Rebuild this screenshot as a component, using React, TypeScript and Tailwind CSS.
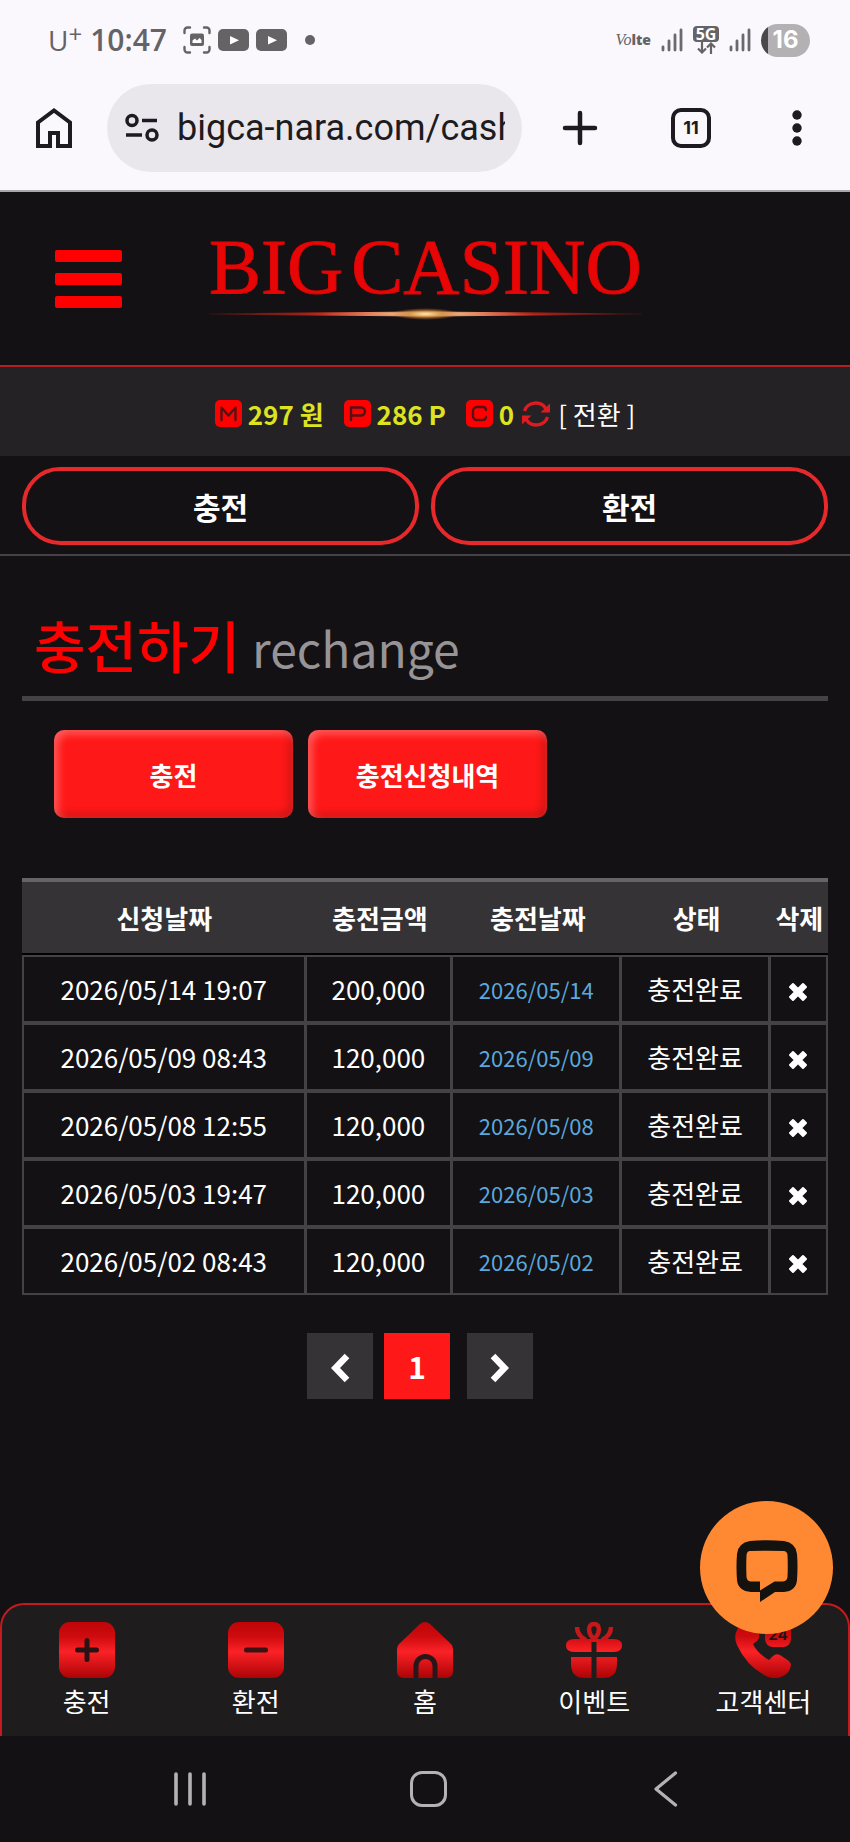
import React from "react";

interface DepositRow {
  requestedAt: string;
  amount: string;
  paidAt: string;
  status: string;
}

interface NavItem {
  label: string;
  icon: React.ReactNode;
}

const deposits: DepositRow[] = [
  { requestedAt: "2026/05/14 19:07", amount: "200,000", paidAt: "2026/05/14", status: "충전완료" },
  { requestedAt: "2026/05/09 08:43", amount: "120,000", paidAt: "2026/05/09", status: "충전완료" },
  { requestedAt: "2026/05/08 12:55", amount: "120,000", paidAt: "2026/05/08", status: "충전완료" },
  { requestedAt: "2026/05/03 19:47", amount: "120,000", paidAt: "2026/05/03", status: "충전완료" },
  { requestedAt: "2026/05/02 08:43", amount: "120,000", paidAt: "2026/05/02", status: "충전완료" },
];

const SignalIcon = () => (
  <svg width="22" height="24" viewBox="0 0 22 24" stroke="#6b696b" strokeWidth="2.8" strokeLinecap="round">
    <path d="M2 22v-3M8 22V13M14 22V7M20 22V2" />
  </svg>
);

const VideoIcon = () => (
  <svg width="31" height="22" viewBox="0 0 31 22">
    <rect width="31" height="22" rx="5" fill="#656365" />
    <path d="M12 7l9 4.200-9 4.200z" fill="#fff" />
  </svg>
);

const StatusBar = () => (
  <div className="flex items-center justify-between h-[80px] pl-12 pr-[40px] text-[#656365]">
    <div className="flex items-center">
      <span className="flex items-start font-['Open_Sans',sans-serif] font-normal text-[28px] leading-8">
        U<span className="text-2xl leading-5 font-normal">+</span>
      </span>
      <span className="ml-2 font-['Open_Sans',sans-serif] font-semibold text-[30px] leading-8">10:47</span>
      <div className="flex items-center gap-[7px] ml-4">
        <svg width="28" height="28" viewBox="0 0 28 28" fill="none" stroke="#656365" strokeWidth="2.400" strokeLinecap="round">
          <path d="M1.500 7V4.500a3 3 0 0 1 3-3H7M21 1.500h2.500a3 3 0 0 1 3 3V7M26.500 21v2.500a3 3 0 0 1-3 3H21M7 26.500H4.500a3 3 0 0 1-3-3V21" />
          <rect x="7" y="7.500" width="14" height="12.500" rx="2" fill="#656365" stroke="none" />
          <path d="M9.500 17v-2.500l2.500-2 2 2 2.500-2.500 2 2V17z" fill="#fff" stroke="none" />
        </svg>
        <VideoIcon />
        <VideoIcon />
      </div>
      <span className="ml-[18px] w-[10px] h-[10px] rounded-full bg-[#656365]" />
    </div>
    <div className="flex items-center gap-[10px]">
      <span className="flex items-end leading-5">
        <i className="font-['Liberation_Serif',serif] text-base leading-5">Vo</i>
        <b className="font-['Open_Sans',sans-serif] font-extrabold text-sm leading-5">lte</b>
      </span>
      <SignalIcon />
      <div className="flex flex-col items-center">
        <span className="w-[26px] rounded bg-[#656365] text-white text-center font-['Open_Sans',sans-serif] font-bold text-base leading-4">
          5G
        </span>
        <svg width="20" height="12" viewBox="0 0 20 12" fill="none" stroke="#656365" strokeWidth="2.200">
          <path d="M6 0v10.500M2 6.500l4 4 4-4M15 12V1.500M11 5.500l4-4 4 4" />
        </svg>
      </div>
      <SignalIcon />
      <div className="flex items-center justify-center w-[49px] h-[33px] rounded-full overflow-hidden bg-linear-to-r from-[#4a484a] from-15% to-[#b3b1b4] to-15%">
        <span className="font-['Inter',sans-serif] font-bold text-2xl leading-8 text-white">16</span>
      </div>
    </div>
  </div>
);

const BrowserToolbar = () => (
  <div className="flex items-center h-[112px] pb-[18px] pt-1 text-[#1d1b20] border-b-2 border-[#a9a7ab]">
    <button type="button" aria-label="홈" className="flex justify-center w-[107px]">
      <svg width="36" height="40" viewBox="0 0 36 40" fill="none" stroke="currentColor" strokeWidth="4">
        <path d="M2 38V14.500L18 2.500l16 12V38H22V25h-8v13z" />
      </svg>
    </button>
    <div className="flex flex-1 min-w-0 items-center h-[88px] rounded-full bg-[#e9e7ec] pl-[18px] pr-[17px]">
      <svg className="shrink-0" width="34" height="30" viewBox="0 0 34 30" fill="none" stroke="currentColor" strokeWidth="3.500">
        <circle cx="7" cy="7.500" r="5" />
        <path d="M17 7.500h15M1 22h16" />
        <circle cx="27" cy="22" r="5" />
      </svg>
      <input
        aria-label="주소"
        className="flex-1 min-w-0 ml-[18px] bg-transparent outline-none font-['Roboto',sans-serif] text-[36px] leading-[44px]"
        defaultValue="bigca-nara.com/cash"
      />
    </div>
    <button type="button" aria-label="새 탭" className="flex justify-center w-[116px]">
      <svg width="36" height="36" viewBox="0 0 36 36" stroke="currentColor" strokeWidth="4.500" strokeLinecap="round">
        <path d="M18 3v30M3 18h30" />
      </svg>
    </button>
    <button type="button" aria-label="탭 11개" className="flex justify-center w-[106px]">
      <span className="flex items-center justify-center w-10 h-10 rounded-[10px] border-4 border-current font-['Inter',sans-serif] font-bold text-lg">
        11
      </span>
    </button>
    <button type="button" aria-label="메뉴" className="flex justify-center w-[106px]">
      <svg width="10" height="36" viewBox="0 0 10 36" fill="currentColor">
        <circle cx="5" cy="5" r="4.700" />
        <circle cx="5" cy="18" r="4.700" />
        <circle cx="5" cy="31" r="4.700" />
      </svg>
    </button>
  </div>
);

const SiteHeader = () => (
  <header className="flex items-center h-[175px] pl-[55px] border-b-2 border-[#b32024]">
    <button type="button" aria-label="전체 메뉴" className="flex flex-col gap-[11px]">
      <span className="w-[67px] h-3 rounded-xs bg-[#ff0000]" />
      <span className="w-[67px] h-3 rounded-xs bg-[#ff0000]" />
      <span className="w-[67px] h-3 rounded-xs bg-[#ff0000]" />
    </button>
    <a href="#" className="flex flex-col ml-[87px] pb-2">
      <span className="flex gap-2 font-['Liberation_Serif',serif] text-[78px] leading-[78px] whitespace-nowrap text-[#e80505] [-webkit-text-stroke:1px_#e00505]">
        <span>BIG</span>
        <span>CASINO</span>
      </span>
      <svg className="w-full" height="16" viewBox="0 0 430 16" preserveAspectRatio="none">
        <defs>
          <linearGradient id="beam">
            <stop offset="0" stopColor="#7a1a1a" stopOpacity="0.3" />
            <stop offset="0.25" stopColor="#c8251a" />
            <stop offset="0.5" stopColor="#ffe2a0" />
            <stop offset="0.75" stopColor="#c8251a" />
            <stop offset="1" stopColor="#7a1a1a" stopOpacity="0.3" />
          </linearGradient>
          <radialGradient id="spark">
            <stop offset="0" stopColor="#ffe9b0" />
            <stop offset="0.5" stopColor="#d08a3c" stopOpacity="0.8" />
            <stop offset="1" stopColor="#d0602c" stopOpacity="0" />
          </radialGradient>
        </defs>
        <path d="M0 8Q150 7 215 6Q280 7 430 8Q280 9 215 10Q150 9 0 8z" fill="url(#beam)" stroke="url(#beam)" />
        <ellipse cx="215" cy="8" rx="34" ry="6" fill="url(#spark)" />
      </svg>
    </a>
  </header>
);

const Badge = ({ path }: { path: string }) => (
  <svg width="27" height="27" viewBox="0 0 27 27">
    <rect width="27" height="27" rx="5" fill="#ff0000" />
    <path d={path} fill="none" stroke="#5a1012" strokeWidth="2.400" strokeLinecap="round" strokeLinejoin="round" />
  </svg>
);

const Balance = () => (
  <div className="flex items-center justify-center gap-5 h-[89px] pt-1 bg-[#242224] text-[26px] leading-8">
    <p className="flex items-center gap-[6px] font-bold text-[#dde221]">
      <Badge path="M6.500 20V7.500l7 8 7-8V20" />
      297 원
    </p>
    <p className="flex items-center gap-[6px] font-bold text-[#dde221]">
      <Badge path="M7 20V7.500h10a3.500 3.500 0 0 1 0 8H7" />
      286 P
    </p>
    <div className="flex items-center gap-2">
      <p className="flex items-center gap-[6px] font-bold text-[#dde221]">
        <Badge path="M20 10a3 3 0 0 0-3-3h-6a4 4 0 0 0-4 4v5a4 4 0 0 0 4 4h6a3 3 0 0 0 3-3" />
        0
      </p>
      <button type="button" className="flex items-center gap-2 text-white">
        <svg width="28" height="28" viewBox="0 0 28 28" fill="none" stroke="#e01b1f" strokeWidth="3.400">
          <path d="M2.500 11a11.500 10.500 0 0 1 21.500-2M25.500 17a11.500 10.500 0 0 1-21.500 2" />
          <path d="M28 3.500v9h-9.500zM0 24.500v-9h9.500z" fill="#e01b1f" stroke="none" />
        </svg>
        [ 전환 ]
      </button>
    </div>
  </div>
);

const QuickActions = () => (
  <div className="grid grid-cols-2 gap-3 px-[22px] pt-[11px] pb-[9px] border-b-2 border-[#444246]">
    <button type="button" className="h-[78px] rounded-[38px] border-4 border-[#e8292c] text-[30px] font-bold text-white">
      충전
    </button>
    <button type="button" className="h-[78px] rounded-[38px] border-4 border-[#e8292c] text-[30px] font-bold text-white">
      환전
    </button>
  </div>
);

const DepositTable = () => (
  <table className="w-full mt-[60px] table-fixed border-separate border-spacing-0 text-center text-[26px] text-white">
    <colgroup>
      <col className="w-[35.3%]" />
      <col className="w-[18.2%]" />
      <col className="w-[21%]" />
      <col className="w-[18.4%]" />
      <col />
    </colgroup>
    <thead>
      <tr>
        {["신청날짜", "충전금액", "충전날짜", "상태", "삭제"].map((head) => (
          <th
            key={head}
            scope="col"
            className="p-0 font-bold leading-[71px] whitespace-nowrap bg-[#353335] border-t-4 border-t-[#666466] border-b-2 border-b-black"
          >
            {head}
          </th>
        ))}
      </tr>
    </thead>
    <tbody className="leading-[64px] [&_td]:p-0 [&_td]:border-[#444246] [&_td]:border-b-4 [&_td]:border-r-3 [&_td:first-child]:border-l-2 [&_td:last-child]:border-r-2 [&_tr:first-child>td]:border-t-2 [&_tr:last-child>td]:border-b-2">
      {deposits.map((row) => (
        <tr key={row.requestedAt}>
          <td>{row.requestedAt}</td>
          <td>{row.amount}</td>
          <td className="text-[22px] text-[#5aa9dd]">{row.paidAt}</td>
          <td>{row.status}</td>
          <td>
            <button type="button" aria-label="삭제" className="block mx-auto pt-[6px]">
              <svg width="20" height="20" viewBox="0 0 20 20" fill="#fff" stroke="#fff" strokeWidth="2" strokeLinejoin="round">
                <path d="M5 2l5 5 5-5 3 3-5 5 5 5-3 3-5-5-5 5-3-3 5-5-5-5z" />
              </svg>
            </button>
          </td>
        </tr>
      ))}
    </tbody>
  </table>
);

const Pager = () => (
  <nav aria-label="페이지" className="flex justify-center gap-[11px] mt-[38px] pr-[10px]">
    <button type="button" aria-label="이전" className="flex items-center justify-center w-[66px] h-[66px] pt-1 bg-[#353335]">
      <svg width="20" height="30" viewBox="0 0 20 30" fill="none" stroke="#fff" strokeWidth="6.500">
        <path d="M17 3L5.500 15 17 27" />
      </svg>
    </button>
    <button type="button" aria-current="page" className="w-[66px] h-[66px] bg-[#ff1818] text-[30px] font-bold text-white">
      1
    </button>
    <button type="button" aria-label="다음" className="flex items-center justify-center w-[66px] h-[66px] pt-1 ml-[6px] bg-[#353335]">
      <svg width="20" height="30" viewBox="0 0 20 30" fill="none" stroke="#fff" strokeWidth="6.500">
        <path d="M3 3l11.500 12L3 27" />
      </svg>
    </button>
  </nav>
);

const navItems: NavItem[] = [
  {
    label: "충전",
    icon: (
      <>
        <rect width="56" height="56" rx="11" fill="url(#navRed)" />
        <path d="M28 18.500v19M18.500 28h19" stroke="#2a1214" strokeWidth="5" strokeLinecap="round" />
      </>
    ),
  },
  {
    label: "환전",
    icon: (
      <>
        <rect width="56" height="56" rx="11" fill="url(#navRed)" />
        <path d="M18.500 28h19" stroke="#3a1214" strokeWidth="5" strokeLinecap="round" />
      </>
    ),
  },
  {
    label: "홈",
    icon: (
      <>
        <path
          d="M23 2q5-4 10 0l21 20q2 2 2 5v22q0 7-7 7H7q-7 0-7-7V27q0-3 2-5z"
          fill="url(#navRed)"
        />
        <path d="M19 56V44a9.500 9.500 0 0 1 19 0v12" fill="none" stroke="#2a1618" strokeWidth="5" />
      </>
    ),
  },
  {
    label: "이벤트",
    icon: (
      <>
        <g fill="none" stroke="#c4181b" strokeWidth="4.500">
          <path d="M28 17c-6-5-7-15 0-15s6 10 0 15z" />
          <path d="M11 5c0 6 3 10 9 13M45 5c0 6-3 10-9 13" />
        </g>
        <path d="M8 17h40q8 0 8 6.500T48 30H8q-8 0-8-6.500T8 17z" fill="url(#navRed)" />
        <path d="M5 35h46v7q0 14-14 14H19Q5 56 5 42z" fill="url(#navRed)" />
        <path d="M28 20v36" stroke="#1e1c1c" strokeWidth="5" />
      </>
    ),
  },
  {
    label: "고객센터",
    icon: (
      <>
        <path
          d="M3 6Q-2 14 2 23q9 20 27 30 8 5 17 2 10-4 10-13-1-3-5-5l-6-4q-4-2-7 1l-4 4Q22 31 18 22l4-3q3-3 2-7l-4-8Q10-2 3 6z"
          fill="url(#navRed)"
        />
        <rect x="30" y="0" width="26" height="25" rx="8" fill="url(#navRed)" />
        <text x="43" y="18" textAnchor="middle" fontFamily="Inter, sans-serif" fontWeight="700" fontSize="15" fill="#2a1214">
          24
        </text>
      </>
    ),
  },
];

const BottomNav = () => (
  <div className="relative">
    <nav className="grid grid-cols-5 h-[133px] pt-[17px] rounded-t-3xl border-2 border-b-0 border-[#c41a1e] bg-[#1e1c1d]">
      {navItems.map((item) => (
        <a key={item.label} href="#" className="flex flex-col items-center gap-[5px] text-[26px] leading-9 text-white">
          <svg width="56" height="56" viewBox="0 0 56 56">
            <defs>
              <linearGradient id="navRed" gradientUnits="userSpaceOnUse" x1="0" y1="0" x2="0" y2="56">
                <stop offset="0" stopColor="#c00508" />
                <stop offset="0.25" stopColor="#cc0b0e" />
                <stop offset="0.53" stopColor="#fb2226" />
                <stop offset="1" stopColor="#ac0306" />
              </linearGradient>
            </defs>
            {item.icon}
          </svg>
          {item.label}
        </a>
      ))}
    </nav>
    <button
      type="button"
      aria-label="채팅 상담"
      className="absolute right-[17px] -top-[102px] flex items-center justify-center w-[133px] h-[133px] rounded-full bg-[#ff8933]"
    >
      <svg className="mt-[7px]" width="62" height="62" viewBox="0 0 62 62">
        <path
          fillRule="evenodd"
          fill="#14120f"
          d="M14 1Q31-.5 48 1 60 3 61 14q1 12 0 26-1 11-13 12h-9L24 62V52H15Q2 51 1 40 0 27 1 14 2 3 14 1zM14 11q-3 0-3.500 4-.5 11 0 22 .5 4 4 4.500H24v9L38.500 41.500H47q4-.5 4.500-4.500.5-11 0-22-.5-4-4-4Q31 10.500 14 11z"
        />
      </svg>
    </button>
  </div>
);

const SystemNav = () => (
  <div className="grid grid-cols-3 items-center justify-items-center h-[106px] pl-[71px] pr-[65px]">
    <button type="button" aria-label="최근 앱">
      <svg width="34" height="36" viewBox="0 0 34 36" stroke="#b5b1b5" strokeWidth="3.600" strokeLinecap="round">
        <path d="M3 3v30M17 3v30M31 3v30" />
      </svg>
    </button>
    <button type="button" aria-label="홈 화면" className="w-[37px] h-9 rounded-xl border-3 border-[#b5b1b5]" />
    <button type="button" aria-label="뒤로">
      <svg width="24" height="36" viewBox="0 0 24 36" fill="none" stroke="#b5b1b5" strokeWidth="3.200" strokeLinecap="round" strokeLinejoin="round">
        <path d="M21.500 2L2 18l19.500 16" />
      </svg>
    </button>
  </div>
);

const App: React.FC = () => {
  return (
    <div className="flex flex-col min-h-screen bg-[#131113] font-['Noto_Sans_CJK_KR',sans-serif]">
      <div className="bg-[#faf8fd]">
        <StatusBar />
        <BrowserToolbar />
      </div>
      <SiteHeader />
      <Balance />
      <QuickActions />
      <main className="flex-1 px-[22px] pt-[52px]">
        <h1 className="flex items-baseline gap-3 pl-3 pb-[13px] border-b-5 border-[#444246] text-[56px] leading-[72px] font-medium text-[#ff0000]">
          충전하기
          <span className="text-5xl leading-[72px] font-normal text-[#969496]">rechange</span>
        </h1>
        <div className="flex gap-[15px] mt-[29px] px-8 text-[26px] font-bold text-white">
          <button
            type="button"
            className="w-[239px] h-[88px] rounded-[10px] bg-[#ff1818] shadow-[inset_4px_4px_8px_rgba(255,255,255,0.3),inset_-4px_-4px_8px_rgba(0,0,0,0.2)]"
          >
            충전
          </button>
          <button
            type="button"
            className="w-[239px] h-[88px] rounded-[10px] bg-[#ff1818] shadow-[inset_4px_4px_8px_rgba(255,255,255,0.3),inset_-4px_-4px_8px_rgba(0,0,0,0.2)]"
          >
            충전신청내역
          </button>
        </div>
        <DepositTable />
        <Pager />
      </main>
      <BottomNav />
      <SystemNav />
    </div>
  );
};

export default App;
